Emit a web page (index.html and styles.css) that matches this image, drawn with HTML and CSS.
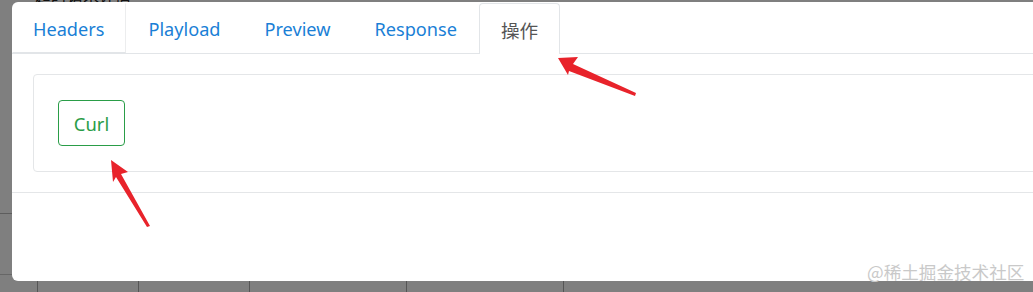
FILE: index.html
```html
<!DOCTYPE html>
<html lang="zh">
<head>
<meta charset="utf-8">
<title>Request detail</title>
<link rel="stylesheet" href="styles.css">
</head>
<body>
<div class="page">
  <div class="page-title">超时请求详情</div>
  <div class="page-rule"></div>
  <div class="page-table">
    <div class="cell c1"></div>
    <div class="cell c2"></div>
    <div class="cell c3"></div>
    <div class="cell c4"></div>
    <div class="cell c5"></div>
  </div>
</div>

<div class="backdrop"></div>

<div class="modal">
  <ul class="nav-tabs">
    <li class="tab tab-hover">Headers</li>
    <li class="tab">Playload</li>
    <li class="tab">Preview</li>
    <li class="tab">Response</li>
    <li class="tab active">操作</li>
  </ul>
  <div class="tab-content">
    <div class="card">
      <div class="card-body">
        <button class="btn-outline-success">Curl</button>
      </div>
    </div>
  </div>
  <div class="modal-footer"></div>
</div>

<svg class="arrows" width="1033" height="292" viewBox="0 0 1033 292" xmlns="http://www.w3.org/2000/svg">
  <polygon fill="#e8232b" points="558,58 578,57 573,64 636,93 635,96 569,71 568,75"/>
  <polygon fill="#e8232b" points="111,160 128,172 121,174 150,226 147,227 116,177 113,182"/>
</svg>

<div class="watermark">@稀土掘金技术社区</div>
</body>
</html>
```

FILE: styles.css
```css
html, body {
  margin: 0;
  padding: 0;
  width: 1033px;
  height: 292px;
  overflow: hidden;
}

body {
  font-family: "Noto Sans", "Noto Sans CJK SC", sans-serif;
  background: #ffffff;
  position: relative;
}

.page {
  width: 1033px;
  height: 292px;
  display: flex;
  flex-direction: column;
}

.page-title {
  margin-top: -14px;
  padding-left: 35px;
  font-size: 16px;
  line-height: 18px;
  color: #222;
  font-family: "Noto Sans CJK SC", sans-serif;
}

.page-rule {
  margin-top: 209px;
  height: 1px;
  background: #bbb;
}

.page-table {
  margin-top: 60px;
  display: flex;
  height: 20px;
  border-top: 1px solid #ccc;
}

.cell { border-right: 1px solid #aaa; }
.c1 { width: 37px; }
.c2 { width: 100px; }
.c3 { width: 110px; }
.c4 { width: 156px; }
.c5 { width: 156px; }

.backdrop {
  position: absolute;
  inset: 0;
  background: rgba(0, 0, 0, 0.5);
}

.modal {
  position: absolute;
  left: 12px;
  top: 2px;
  width: 1100px;
  height: 279px;
  background: #fff;
  border-radius: 6px;
  display: flex;
  flex-direction: column;
}

.nav-tabs {
  list-style: none;
  margin: 0;
  padding: 1px 0 0 0;
  display: flex;
  border-bottom: 1px solid #e2e5e8;
}

.tab {
  height: 49px;
  line-height: 51px;
  padding: 0 21px;
  font-size: 18.15px;
  color: #1a7fd6;
  border: 1px solid transparent;
  border-bottom: 0;
  border-radius: 4px 4px 0 0;
  margin-bottom: -1px;
}

.tab-hover {
  border-color: transparent #ecedee transparent transparent;
  border-bottom: 1px solid #e2e5e8;
  height: 48px;
  border-radius: 0;
  padding-left: 20px;
}

.tab.active {
  color: #555;
  background: #fff;
  border-color: #e2e5e8;
  height: 50px;
  font-family: "Noto Sans CJK SC", sans-serif;
  font-size: 18.6px;
}

.tab-content {
  padding: 20px 21px 20px 21px;
}

.card {
  border: 1px solid #e4e6e8;
  border-radius: 4px;
}

.card-body {
  padding: 25px 24px;
}

.btn-outline-success {
  display: block;
  width: 67px;
  height: 46px;
  padding: 0;
  font-family: "Noto Sans", sans-serif;
  font-size: 18.4px;
  color: #2a9d48;
  background: #fff;
  border: 1px solid #2a9d48;
  border-radius: 4px;
}

.modal-footer {
  border-top: 1px solid #e4e6e8;
  flex: 1;
}

.arrows {
  position: absolute;
  left: 0;
  top: 0;
}

.watermark {
  position: absolute;
  left: 867px;
  top: 261px;
  font-family: "Noto Sans CJK SC", sans-serif;
  font-size: 17.6px;
  line-height: 22px;
  color: #c9c9c9;
}
```
